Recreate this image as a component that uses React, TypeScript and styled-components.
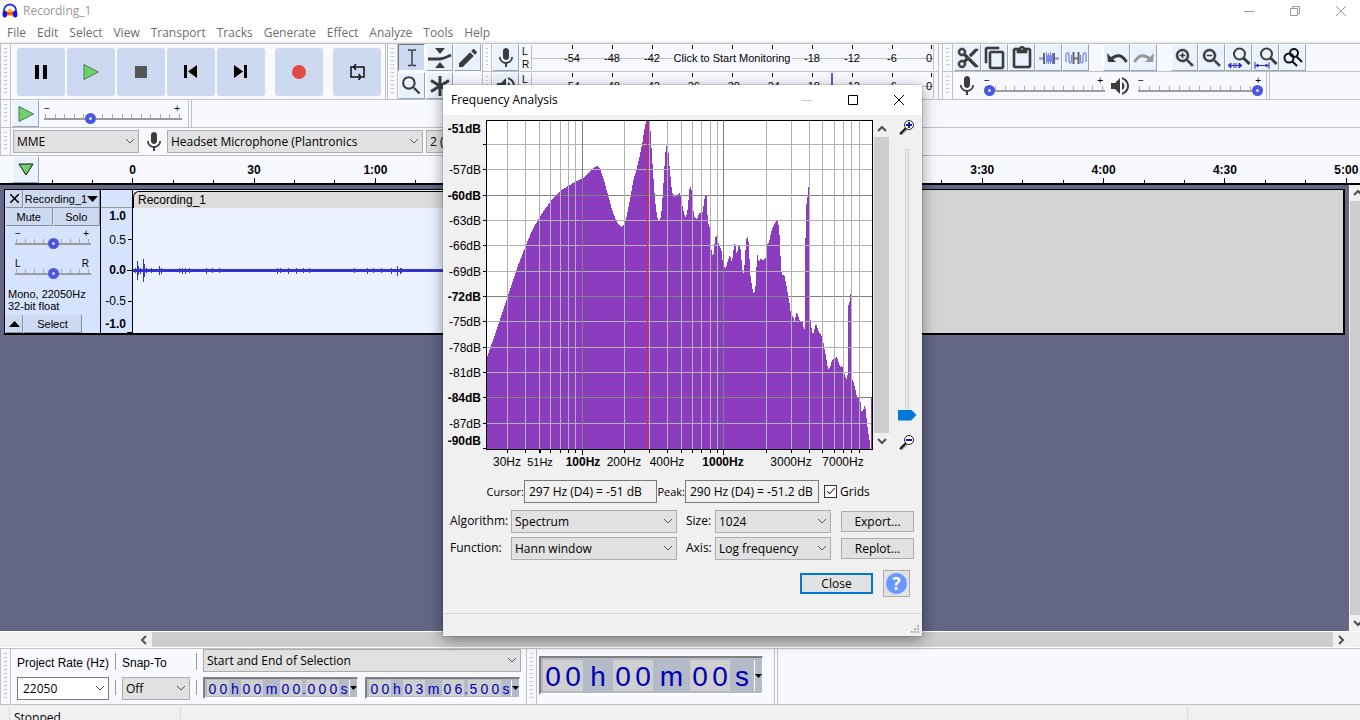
import React from "react";
import styled, { createGlobalStyle, css } from "styled-components";
import {
  MdMic, MdVolumeUp, MdContentCut, MdContentCopy, MdContentPaste,
  MdZoomIn, MdZoomOut, MdSearch, MdEdit,
} from "react-icons/md";

const ui = `"Open Sans", "Noto Sans", sans-serif`;
const arial = `"Liberation Sans", Arial, sans-serif`;
const line = "#c0c0c0";
const paper = "#f8f9ff";
const ink = "#3c3c3c";
const wave = "#3333cc";

const GlobalStyle = createGlobalStyle`
  *, *::before, *::after { box-sizing: border-box; }
  body { margin: 0; background: #fff; font: 11px/16px ${ui}; color: #000; overflow: hidden; }
  button, select, input { font: inherit; color: inherit; margin: 0; border-radius: 0; }
  button { padding: 0; border: 0; background: none; display: flex; align-items: center; justify-content: center; }
  svg { display: block; flex: none; }
`;

const Page = styled.div`
  position: relative;
  display: flex;
  flex-direction: column;
  height: 100vh;
  min-height: 700px;
  overflow: hidden;
`;

/* ---------- window chrome ---------- */
const TitleBar = styled.header`
  display: flex;
  align-items: center;
  height: 22px;
  padding-left: 2px;
  margin-right: -4px;
  color: #999;
`;
const WindowName = styled.span`
  flex: 1;
  font-size: 12px;
`;
const AppName = styled(WindowName)`
  padding-left: 5px;
`;
const ChromeButton = styled.button`
  width: 46px;
  height: 100%;
`;
const MenuBar = styled.nav`
  display: flex;
  gap: 11px;
  height: 21px;
  padding: 2px 7px 0;
  border-bottom: 2px solid #f0f0f0;
  color: #6d6d6d;
  background: #fff;
`;
const MenuItem = styled.button`
  font-size: 12px;
  height: 17px;
`;

/* ---------- docked toolbars ---------- */
const Dock = styled.div`
  background: ${paper};
  border-top: 1px solid ${line};
`;
const DockRow = styled.div<{ $h: number }>`
  display: flex;
  height: ${(p) => p.$h}px;
  border-bottom: 1px solid ${line};
`;
const Grip = styled.div<{ $slim?: boolean }>`
  width: ${(p) => (p.$slim ? 10 : 11)}px;
  flex: none;
  align-self: stretch;
  border: solid ${line};
  border-width: 0 1px;
  padding: 4px 3px;
  &::before {
    content: "";
    display: block;
    height: 100%;
    background: repeating-linear-gradient(#c4c4c4 0 1px, transparent 1px 4px);
  }
`;
const TransportBar = styled.div`
  display: flex;
  align-items: center;
  gap: 2px;
  width: 375px;
  padding: 0 4px 0 6px;
  border-right: 1px solid ${line};
  margin-right: 1px;
`;
const TransportButton = styled.button<{ $apart?: boolean }>`
  width: 48px;
  height: 48px;
  border-radius: 3px;
  background: #cdd9f1;
  margin-left: ${(p) => (p.$apart ? 8 : 0)}px;
`;
const ToolGrid = styled.div`
  display: grid;
  grid-template-columns: repeat(3, 28px);
  grid-auto-rows: 28px;
`;
const Tool = styled.button<{ $on?: boolean; $bold?: boolean }>`
  width: 27px;
  height: 27px;
  flex: none;
  color: ${ink};
  background: #eaf1ff;
  border: 1px solid #fff;
  border-color: #fff #9aa3b8 #9aa3b8 #fff;
  ${(p) => p.$on && css`
    background: #cdd9f1;
    border-color: #70788c #fff #fff #70788c;
  `}
  ${(p) => p.$bold && css`
    path { stroke-width: 0.6; }
    path[fill="none"] { stroke: none; }
  `}
`;
const Stack = styled.div<{ $fill?: boolean }>`
  display: flex;
  flex-direction: column;
  flex: ${(p) => (p.$fill ? "1" : "none")};
  > :nth-child(2) {
    height: 27px;
    border-bottom: 0;
  }
`;
const BarRow = styled.div`
  display: flex;
  align-items: center;
  height: 28px;
  border-bottom: 1px solid ${line};
`;
const PlainRow = styled.div`
  display: flex;
  align-items: center;
`;
const Space = styled.div<{ $w: number }>`
  width: ${(p) => p.$w}px;
  flex: none;
`;
const EndLines = styled.div`
  width: 4px;
  align-self: stretch;
  border: solid ${line};
  border-width: 0 1px;
`;

/* ---------- meters ---------- */
const MeterRow = styled(BarRow)`
  width: 447px;
  margin-right: 3px;
  border-right: 1px solid ${line};
`;
const Channels = styled.div`
  display: flex;
  flex-direction: column;
  width: 12px;
  padding-left: 3px;
  font: 10px/13px ${arial};
`;
const Scale = styled.div`
  position: relative;
  display: flex;
  width: 403px;
  height: 25px;
  padding-left: 20px;
  border: solid ${line};
  border-width: 0 1px;
  font: 11px/14px ${arial};
  background: linear-gradient(${line}, ${line}) 0 13px / 100% 1px no-repeat;
`;
const ScaleMark = styled.div<{ $end?: boolean }>`
  display: flex;
  flex-direction: column;
  align-items: ${(p) => (p.$end ? "flex-end" : "center")};
  gap: 2px;
  width: ${(p) => (p.$end ? 20 : 40)}px;
  &::before { content: ""; width: 1px; height: 4px; background: #000; }
`;
const Monitor = styled.button`
  position: absolute;
  left: 140px;
  top: 5px;
  width: 120px;
  height: 16px;
  background: ${paper};
`;
const PeakMark = styled.div`
  position: absolute;
  left: 299px;
  top: 0;
  width: 2px;
  height: 12px;
  background: #5a5ae0;
`;

/* ---------- sliders ---------- */
const SliderBox = styled.div<{ $w: number }>`
  width: ${(p) => p.$w}px;
  height: 20px;
  position: relative;
  flex: none;
`;
const Ends = styled.div`
  display: flex;
  justify-content: space-between;
  height: 10px;
  padding-right: 2px;
  font: 10px/10px ${arial};
`;
const Ticks = styled.div`
  display: flex;
  justify-content: space-between;
  height: 6px;
  padding: 0 2px 0 1px;
  border-bottom: 2px solid #9c9c9c;
  i { width: 1px; height: 4px; background: #aaa; }
  i:first-child, i:last-child { height: 5px; }
`;
const Range = styled.input`
  position: absolute;
  left: 0;
  top: 9px;
  width: 100%;
  height: 11px;
  appearance: none;
  background: transparent;
  &::-webkit-slider-thumb {
    appearance: none;
    width: 11px;
    height: 11px;
    border-radius: 50%;
    border: 4px solid #4a55e0;
    background: #d8d8d8;
  }
`;
function Slider({ w, value, label, ticks = 15, ends = ["−", "+"] }: { w: number; value: number; label: string; ticks?: number; ends?: string[] }) {
  return (
    <SliderBox $w={w}>
      <Ends><span>{ends[0]}</span><span>{ends[1]}</span></Ends>
      <Ticks>{Array.from({ length: ticks }, (_, i) => <i key={i} />)}</Ticks>
      <Range type="range" min={0} max={100} defaultValue={value} aria-label={label} />
    </SliderBox>
  );
}

/* ---------- drop-downs ---------- */
const Drop = styled.div<{ $w?: number; $white?: boolean }>`
  position: relative;
  width: ${(p) => (p.$w ? p.$w + "px" : "100%")};
  height: 23px;
  flex: none;
  select {
    appearance: none;
    width: 100%;
    height: 100%;
    padding: 0 20px 0 ${(p) => (p.$white ? 5 : 3)}px;
    font-size: 12px;
    border: 1px solid ${(p) => (p.$white ? "#7a7a7a" : "#adadad")};
    background: ${(p) => (p.$white ? "#fff" : "#e1e1e1")};
  }
  svg { position: absolute; right: 4px; top: 8px; pointer-events: none; }
`;
function Select({ w, text, label, white, id }: { w?: number; text: string; label?: string; white?: boolean; id?: string }) {
  return (
    <Drop $w={w} $white={white}>
      <select id={id} aria-label={label}><option>{text}</option></select>
      <svg width="10" height="7" fill="none" stroke="#555"><path d="M1 1l4 4 4-4" /></svg>
    </Drop>
  );
}

/* ---------- timeline ---------- */
const Timeline = styled.div`
  display: flex;
  height: 29px;
  padding-left: 12px;
  background: ${paper};
  border-bottom: 2px solid #000;
  overflow: hidden;
`;
const LeadTick = styled.div`
  width: 33px;
  flex: none;
  border-left: 13px solid transparent;
  display: flex;
  align-items: flex-end;
  &::before { content: ""; width: 1px; height: 3px; background: #000; }
`;
const Hours = styled.div`
  flex: 1;
  display: grid;
  grid-template-columns: repeat(11, 1fr);
  margin-right: -47px;
  font: bold 12px/16px ${arial};
`;
const HalfMinute = styled.div`
  display: flex;
  flex-direction: column;
  align-items: center;
  justify-content: flex-end;
`;
const MinorTicks = styled.div`
  display: grid;
  grid-template-columns: repeat(3, 1fr);
  width: 100%;
  justify-items: center;
  align-items: end;
  height: 5px;
  i { width: 1px; height: 3px; background: #000; }
  i:nth-child(2) { height: 5px; }
`;

/* ---------- tracks ---------- */
const Workspace = styled.main`
  flex: 1;
  min-height: 0;
  display: flex;
  background: #636685;
`;
const TrackList = styled.div`
  flex: 1;
  min-width: 0;
  padding: 4px 4px 0 4px;
  border-right: 1px solid #fff;
`;
const Track = styled.section`
  display: flex;
  height: 146px;
  border: solid #000;
  border-width: 1px 2px 2px 1px;
  background: #d6e3ff;
`;
const Panel = styled.div`
  display: flex;
  flex-direction: column;
  width: 96px;
  padding-left: 1px;
  border-right: 1px solid #000;
  font: 11px/12px ${arial};
`;
const PanelRow = styled.div`
  display: flex;
  height: 18px;
  gap: 1px;
  background: #d6e3ff;
`;
const PanelButton = styled.button<{ $w?: number }>`
  ${(p) => (p.$w ? `width: ${p.$w}px;` : "flex: 1;")}
  background: #cdd9f1;
  border: solid #8a8f9c;
  border-width: 0 1px 1px 0;
`;
const PanelSliders = styled.div`
  display: flex;
  flex-direction: column;
  gap: 10px;
  flex: 1;
  padding: 3px 9px 0;
`;
const Info = styled.div`
  padding: 0 2px 3px;
  white-space: nowrap;
`;
const VRuler = styled.div`
  width: 32px;
  border-right: 1px solid #000;
`;
const ClipArea = styled.div`
  flex: 1;
  background: #d4d4d4;
`;
const Clip = styled.div`
  width: 63%;
  height: 100%;
  padding-top: 1px;
  background: #ebf1ff;
`;
const ClipName = styled.div`
  height: 17px;
  padding-left: 4px;
  border: solid #000;
  border-width: 1px 0 0 1px;
  border-radius: 6px 0 0 0;
  background: #dcdcdc;
  font: 12px/16px ${arial};
`;

/* ---------- scroll bars ---------- */
const VScroll = styled.div<{ $w: number }>`
  display: flex;
  flex-direction: column;
  align-items: flex-start;
  width: ${(p) => p.$w}px;
  flex: none;
  background: #f0f0f0;
  overflow: hidden;
`;
const HScroll = styled.div`
  display: flex;
  align-items: center;
  height: 17px;
  flex: none;
  padding: 0 11px 0 136px;
  background: #f0f0f0;
  border: solid #fff;
  border-width: 1px 0 1px;
`;
const ScrollButton = styled.button`
  width: 16px;
  height: 16px;
`;
const Thumb = styled.div`
  flex: 1;
  align-self: stretch;
  background: #cdcdcd;
`;
const Arrow = ({ d }: { d: string }) => (
  <svg width="10" height="10" fill="none" stroke="#505050" strokeWidth="2"><path d={d} /></svg>
);
const UP = "M1 7l4-4 4 4", DOWN = "M1 3l4 4 4-4", LEFT = "M7 1L3 5l4 4", RIGHT = "M3 1l4 4-4 4";

/* ---------- selection bar ---------- */
const BottomBar = styled.div`
  display: flex;
  height: 57px;
  flex: none;
  background: ${paper};
  border: solid ${line};
  border-width: 1px 0;
`;
const Cell = styled.div<{ $w: number }>`
  display: flex;
  flex-direction: column;
  gap: 4px;
  width: ${(p) => p.$w}px;
  padding: 2px 0 0 6px;
`;
const CellLabel = styled.label`
  height: 22px;
  padding-top: 4px;
  font: 12px/16px ${arial};
  white-space: nowrap;
`;
const Divider = styled.div`
  width: 1px;
  margin: 4px 0 9px 6px;
  background: linear-gradient(#999 0 17px, transparent 17px 27px, #999 27px);
`;
const SelectionCell = styled.div`
  display: flex;
  flex-direction: column;
  gap: 5px;
  width: 329px;
  padding-left: 6px;
`;
const TimePair = styled.div`
  display: flex;
  gap: 7px;
`;
const TimeBox = styled.div<{ $big?: boolean }>`
  display: flex;
  width: ${(p) => (p.$big ? 224 : 155)}px;
  height: ${(p) => (p.$big ? 39 : 22)}px;
  padding: ${(p) => (p.$big ? "2px 0 2px 2px" : "1px 0 1px 2px")};
  border: 2px solid #fff;
  border-color: #808080 #fff #fff #808080;
  border-right-width: 1px;
  background: #b4bac8;
  color: #0000b4;
  font: ${(p) => (p.$big ? "28px/34px" : "14px/18px")} ${arial};
`;
const Glyph = styled.span<{ $w: number; $digit?: boolean }>`
  width: ${(p) => p.$w}px;
  flex: none;
  display: flex;
  justify-content: center;
  background: ${(p) => (p.$digit ? "#cfcfcf" : "transparent")};
`;
const TimeMenu = styled.button`
  flex: 1;
  min-width: 0;
  border-left: 1px solid #fff;
`;
const BIG: Record<string, number> = { h: 30, m: 37, s: 24 };
const SMALL: Record<string, number> = { h: 12, m: 17, s: 10, ".": 4 };
function Time({ text, big, label }: { text: string; big?: boolean; label: string }) {
  return (
    <TimeBox $big={big} role="group" aria-label={label}>
      {text.split("").map((c, i) => {
        const digit = c >= "0" && c <= "9";
        return <Glyph key={i} $digit={digit} $w={digit ? (big ? 20 : 11) : (big ? BIG : SMALL)[c]}>{c}</Glyph>;
      })}
      <TimeMenu aria-label="Time format"><svg width="7" height="4"><path d="M0 0h7L3.500 4z" /></svg></TimeMenu>
    </TimeBox>
  );
}
const BigTime = styled.div`
  display: flex;
  align-items: flex-start;
  width: 237px;
  padding: 7px 0 0 2px;
`;
const StatusBar = styled.footer`
  display: flex;
  height: 15px;
  flex: none;
  padding-left: 9px;
  background: #f0f0f0;
  overflow: hidden;
`;
const StatusCell = styled.div<{ $w?: number }>`
  ${(p) => (p.$w ? `width: ${p.$w}px;` : "flex: 1;")}
  height: 22px;
  margin-top: 2px;
  padding: 3px 4px;
  border-left: 1px solid #d8d8d8;
  font-size: 12px;
`;

/* ---------- frequency analysis dialog ---------- */
const Dialog = styled.div`
  position: absolute;
  left: 443px;
  top: 85px;
  width: 479px;
  background: #f0f0f0;
  box-shadow: 0 4px 14px rgba(0, 0, 0, 0.42), 0 0 1px rgba(0, 0, 0, 0.6);
`;
const DialogTitle = styled.div`
  display: flex;
  align-items: center;
  height: 30px;
  padding-left: 8px;
  background: #fff;
  font-size: 12px;
`;
const Plot = styled.div`
  display: flex;
  height: 357px;
`;
const PlotScroll = styled(VScroll)`
  margin: 6px 0 23px;
`;
const ZoomColumn = styled.div`
  display: flex;
  flex-direction: column;
  align-items: center;
  justify-content: space-between;
  width: 33px;
  padding: 4px 0 22px 3px;
`;
const VRange = styled.input`
  writing-mode: vertical-lr;
  direction: rtl;
  appearance: none;
  width: 19px;
  height: 272px;
  background: linear-gradient(#e7eaea, #e7eaea) 8px 1px / 2px 270px no-repeat,
    linear-gradient(#d6d6d6, #d6d6d6) 7px 0 / 4px 100% no-repeat;
  &::-webkit-slider-thumb {
    appearance: none;
    width: 19px;
    height: 11px;
    background: #0078d7;
    clip-path: polygon(0 0, 72% 0, 100% 50%, 72% 100%, 0 100%);
  }
`;
const Readouts = styled.div`
  display: flex;
  align-items: center;
  height: 23px;
  margin: 8px 0 7px 43px;
  font-size: 12px;
  label { display: flex; align-items: center; white-space: nowrap; }
`;
const ReadLabel = styled.label<{ $w: number }>`
  width: ${(p) => p.$w}px;
  justify-content: flex-end;
  font-size: 11px;
`;
const ReadBox = styled.input<{ $w: number }>`
  width: ${(p) => p.$w}px;
  height: 23px;
  padding: 0 4px 1px;
  border: 1px solid #7a7a7a;
  background: #f0f0f0;
`;
const Check = styled.input`
  appearance: none;
  width: 13px;
  height: 13px;
  margin: 0 3px 0 5px;
  border: 1px solid #333;
  background: #fff;
  position: relative;
  &:checked::after {
    content: "";
    position: absolute;
    left: 4px;
    top: 0;
    width: 4px;
    height: 8px;
    border: solid #222;
    border-width: 0 1px 1px 0;
    transform: rotate(42deg);
  }
`;
const Options = styled.div`
  display: grid;
  grid-template-columns: 61px 166px 38px 116px 83px;
  row-gap: 4px;
  padding-left: 7px;
  font-size: 12px;
  label { line-height: 21px; }
  label:nth-of-type(2n) { padding-left: 9px; }
`;
const PushButton = styled.button<{ $main?: boolean }>`
  width: 73px;
  height: 21px;
  font-size: 12px;
  border: ${(p) => (p.$main ? "2px solid #0078d7" : "1px solid #adadad")};
  background: #e1e1e1;
`;
const PushCell = styled.div`
  padding: 1px 0 0 10px;
`;
const Actions = styled.div`
  display: flex;
  justify-content: flex-end;
  align-items: center;
  gap: 10px;
  padding: 10px 12px 16px 0;
`;
const HelpButton = styled.button`
  width: 27px;
  height: 27px;
  border: 1px solid #adadad;
  background: #e1e1e1;
  span {
    width: 21px;
    height: 21px;
    border-radius: 50%;
    background: #6698ff;
    color: #fff;
    font: bold 17px/21px ${ui};
  }
`;
const DialogStatus = styled.div`
  display: flex;
  justify-content: flex-end;
  align-items: flex-end;
  height: 23px;
  padding: 2px;
  border-top: 1px solid #d7d7d7;
`;

/* ---------- spectrum data, in plot coordinates ---------- */
const spectrum = "487,358 492,343 500,320 507,298 512,284 519,263 526,245 532,231 539,218 545,209 551,201 560,191 568,186 575,182 583,178 587,175 592,169 597,166 600,169 603,177 608,195 613,213 617,222 621,227 624,225 627,215 630,200 633,182 637,167 640,155 642,145 644,132 646,121 650,121 651,140 653,172 655,200 657,216 659,223 661,217 663,192 665,158 666,146 668,147 670,172 672,192 674,197 680,193 682,203 684,214 686,218 688,207 689,193 690,185 692,191 693,205 694,217 697,219 700,212 702,215 704,203 705,196 707,196 707,208 708,222 710,228 711,248 713,257 714,252 715,237 717,236 718,242 720,246 722,253 723,267 726,268 728,260 730,255 732,263 733,253 735,241 737,257 738,246 740,246 741,252 742,268 744,275 745,255 747,234 749,245 750,272 752,287 754,295 756,283 757,252 759,262 761,258 763,261 766,257 767,245 769,242 771,233 773,227 775,223 777,219 779,227 780,242 781,270 783,277 784,274 786,283 788,295 790,305 791,317 793,316 795,323 796,312 798,315 800,322 802,320 804,329 805,329 805,279 806,200 807,208 808,187 809,187 809,305 811,325 813,335 816,323 818,330 821,335 823,339 824,346 826,357 828,369 830,368 832,360 837,357 840,367 842,365 844,373 847,380 848,370 848,307 850,300 850,294 851,294 851,380 853,380 855,388 857,397 860,397 860,393 861,411 863,411 865,405 866,413 867,423 869,437 870,443 870,449";
const gridX = [507, 525, 539, 550, 560, 568, 575, 582, 624, 649, 667, 681, 692, 701, 710, 717, 723, 766, 791, 809, 822, 834, 843, 851, 859];
const gridY = [144, 169, 195, 220, 245, 271, 296, 321, 347, 372, 397, 423];
const dbLabels: [string, number, boolean][] = [
  ["-51dB", 128, true], ["-57dB", 169, false], ["-60dB", 195, true], ["-63dB", 220, false], ["-66dB", 245, false],
  ["-69dB", 271, false], ["-72dB", 296, true], ["-75dB", 321, false], ["-78dB", 347, false], ["-81dB", 372, false],
  ["-84dB", 397, true], ["-87dB", 423, false], ["-90dB", 440, true],
];
const hzLabels: [string, number, boolean, number][] = [
  ["30Hz", 507, false, 12], ["51Hz", 540, false, 11], ["100Hz", 583, true, 12], ["200Hz", 624, false, 12],
  ["400Hz", 667, false, 12], ["1000Hz", 723, true, 12], ["3000Hz", 791, false, 12], ["7000Hz", 843, false, 12],
];
function SpectrumPlot() {
  return (
    <svg width="431" height="357" viewBox="443 115 431 357" fontFamily={arial} fontSize="12" shapeRendering="crispEdges">
      <rect x="486" y="120" width="387" height="330" />
      <rect x="487" y="121" width="385" height="328" fill="#fff" />
      <polygon points={`487,449 ${spectrum}`} fill="#8c3cbe" />
      {gridY.map((y) => <rect key={y} x="487" y={y} width="385" height="1" fill={[195, 296, 397].includes(y) ? "#808080" : "#b2b2b2"} />)}
      {gridX.map((x) => <rect key={x} x={x} y="121" width="1" height="328" fill={x === 582 || x === 723 ? "#808080" : "#b2b2b2"} />)}
      <rect x="647" y="121" width="1" height="328" fill="#f0203c" />
      <rect x="871" y="397" width="1" height="52" fill="#8c3cbe" />
      {[...gridY, 448].map((y) => <rect key={y} x="483" y={y} width="3" height="1" />)}
      {[...gridX, 540].map((x) => <rect key={x} x={x} y="450" width="1" height={x === 582 || x === 723 ? 5 : 3} />)}
      {dbLabels.map(([t, y, b]) => <text key={t} x="481" y={y + 5} textAnchor="end" fontWeight={b ? 700 : 400}>{t}</text>)}
      {hzLabels.map(([t, x, b, s]) => <text key={t} x={x} y="466" textAnchor="middle" fontSize={s} fontWeight={b ? 700 : 400}>{t}</text>)}
    </svg>
  );
}

function DialogZoomIcon({ plus }: { plus?: boolean }) {
  return (
    <svg width="16" height="16" viewBox="0 0 16 16">
      <path d="M1 15l6-6" stroke="#aaa" strokeWidth="2" transform="translate(1 1)" />
      <path d="M1 15l6-6" stroke="#111" strokeWidth="2" />
      <circle cx="10" cy="6" r="4.500" fill="#fff" stroke="#222" />
      <path d={plus ? "M7 6h6M10 3v6" : "M7 6h6"} stroke="#1414b4" strokeWidth="2" />
    </svg>
  );
}

/* ---------- icons ---------- */
const Logo = () => (
  <svg width="16" height="16" viewBox="0 0 16 16">
    <path d="M2 10C1 5 4 1.500 8 1.500S15 5 14 10" fill="none" stroke="#2838d0" strokeWidth="1.800" />
    <path d="M4 9l2-2 2-1.500L10 7l2 2v3l-2 1.500-2-1-2 1L4 12z" fill="#ffb428" />
    <path d="M4.500 9.500h7v2h-7z" fill="#f03c14" />
    <ellipse cx="2.800" cy="11" rx="2.300" ry="3.500" fill="#1414e6" />
    <ellipse cx="13.200" cy="11" rx="2.300" ry="3.500" fill="#1414e6" />
  </svg>
);
const PlayIcon = () => (
  <svg width="18" height="18" viewBox="0 0 18 18"><path d="M2 1.500v15L16.500 9z" fill="#6fd06f" stroke="#4b7a4b" /></svg>
);
const SelectIcon = () => (
  <svg width="16" height="20" viewBox="0 0 16 20" stroke={ink} strokeWidth="1.500" fill="none"><path d="M4 2h3.500M8.500 2H12M8 2v15.500M4 17.500h3.500M8.500 17.500H12" /></svg>
);
const EnvelopeIcon = () => (
  <svg width="26" height="22" viewBox="0 0 26 22" fill={ink}>
    <path d="M8 1h10l-5 6zM8 21h10l-5-6z" /><path d="M1 12h11q4 0 12-4" fill="none" stroke={ink} strokeWidth="3" />
  </svg>
);
const StarIcon = () => (
  <svg width="22" height="22" viewBox="0 0 22 22" stroke={ink} strokeWidth="3"><path d="M11 1v20M2 5.500l18 11M20 5.500l-18 11" /></svg>
);
const TrimIcon = () => (
  <svg width="20" height="14" viewBox="0 0 20 14" stroke="#7d8ae8" strokeWidth="1">
    <path d="M0 7.500h4M16 7.500h4" strokeWidth="2" /><path d="M7.500 1v12M9.500 2v11M11.500 1v12M13.500 2v11M8.500 4v7M10.500 4v7M12.500 4v7" /><path d="M5 2v11M15 2v11" stroke="#666" strokeWidth="2" />
  </svg>
);
const SilenceIcon = () => (
  <svg width="22" height="14" viewBox="0 0 22 14" stroke="#7d8ae8" strokeWidth="1.300" fill="none">
    <path d="M1 11V5q0-3 1.500-3T4 5v4q0 3 1.200 3T6.500 9V4M15.500 4v5q0 3 1.300 3T18 9V5q0-3 1.500-3T21 5v6" /><path d="M9 7.500h5" stroke="#777" strokeWidth="2" /><path d="M8.500 1v12M13.500 1v12" stroke="#666" strokeWidth="2" />
  </svg>
);
const UndoArrow = ({ flip }: { flip?: boolean }) => (
  <svg width="22" height="14" viewBox="0 0 22 14" fill="none" stroke={flip ? "#999" : ink} strokeWidth="3">
    <g transform={flip ? "matrix(-1 0 0 1 22 0)" : undefined}>
      <path d="M5 8q9-8 15.500 3" /><path d="M1 2l1 9 8 0z" fill={flip ? "#999" : ink} stroke="none" />
    </g>
  </svg>
);
const FitIcon = ({ d }: { d: string }) => (
  <svg width="24" height="24" viewBox="0 0 24 24" fill="none">
    <circle cx="12.500" cy="8" r="5.500" stroke={ink} strokeWidth="2" /><path d="M16.500 12l6 6" stroke={ink} strokeWidth="3" />
    <path d={d} stroke="#3030c8" fill="#3030c8" />
  </svg>
);
const ToggleZoomIcon = () => (
  <svg width="22" height="22" viewBox="0 0 22 22" fill="none" stroke="#111" strokeWidth="2">
    <circle cx="12" cy="6" r="4" /><circle cx="7" cy="11" r="4.500" /><path d="M14 9l6 6M10 14l5 5" />
  </svg>
);

const meterMarks = ["-54", "-48", "-42", "-36", "-30", "-24", "-18", "-12", "-6"];
const shortMarks = ["-54", "-48", "-42", "", "", "", "-18", "-12", "-6"];
function Meter({ name, marks, children, overlay }: { name: string; marks: string[]; children: React.ReactNode; overlay: React.ReactNode }) {
  return (
    <MeterRow>
      <Tool aria-label={name}>{children}</Tool>
      <Channels><span>L</span><span>R</span></Channels>
      <Scale>
        {marks.map((m, i) => <ScaleMark key={i}>{m}</ScaleMark>)}
        <ScaleMark $end>0</ScaleMark>
        {overlay}
      </Scale>
    </MeterRow>
  );
}

const spikes = [[2, 4], [4, 18], [5, 8], [7, 5], [10, 22], [11, 12], [13, 4], [18, 4], [26, 8], [28, 5], [46, 4], [49, 5], [52, 5], [56, 4], [73, 5], [79, 4], [86, 4], [144, 5], [147, 4], [155, 5], [163, 5], [170, 4], [176, 4], [221, 4], [234, 5], [240, 4], [248, 4], [258, 5], [264, 9], [267, 5], [268, 4]];
const rulerMarks: [string, number, boolean][] = [["1.0", 26, true], ["0.5", 50, false], ["0.0", 80, true], ["-0.5", 111, false], ["-1.0", 134, true]];
const times = ["0", "30", "1:00", "1:30", "2:00", "2:30", "3:00", "3:30", "4:00", "4:30", "5:00"];

export default function App() {
  return (
    <Page>
      <GlobalStyle />
      <TitleBar>
        <Logo />
        <AppName>Recording_1</AppName>
        <ChromeButton aria-label="Minimize"><svg width="10" height="1"><path d="M0 0h10v1H0z" fill="#999" /></svg></ChromeButton>
        <ChromeButton aria-label="Restore"><svg width="10" height="10" fill="none" stroke="#999"><path d="M.5 2.500h7v7h-7zM2.500 2V.5h7v7H8" /></svg></ChromeButton>
        <ChromeButton aria-label="Close window"><svg width="10" height="10" stroke="#999"><path d="M0 0l10 10M10 0L0 10" /></svg></ChromeButton>
      </TitleBar>
      <MenuBar>
        {["File", "Edit", "Select", "View", "Transport", "Tracks", "Generate", "Effect", "Analyze", "Tools", "Help"].map((m) => <MenuItem key={m}>{m}</MenuItem>)}
      </MenuBar>

      <Dock>
        <DockRow $h={56}>
          <Grip />
          <TransportBar>
            <TransportButton aria-label="Pause"><svg width="12" height="14"><path d="M0 0h4v14H0zM8 0h4v14H8z" /></svg></TransportButton>
            <TransportButton aria-label="Play"><PlayIcon /></TransportButton>
            <TransportButton aria-label="Stop"><svg width="12" height="12"><path d="M0 0h12v12H0z" fill="#555" /></svg></TransportButton>
            <TransportButton aria-label="Skip to start"><svg width="14" height="13"><path d="M0 0h3v13H0zM13 0v13L4 6.500z" /></svg></TransportButton>
            <TransportButton aria-label="Skip to end"><svg width="14" height="13"><path d="M10 0h3v13h-3zM0 0v13l9-6.500z" /></svg></TransportButton>
            <TransportButton aria-label="Record" $apart><svg width="14" height="14"><circle cx="7" cy="7" r="7" fill="#e24848" /></svg></TransportButton>
            <TransportButton aria-label="Loop" $apart>
              <svg width="15" height="16" viewBox="0 0 15 16" fill="none" stroke="#111" strokeWidth="1.500">
                <path d="M3 3H1v10h9M4 3h10v10h-2M6 0L3.500 3 6 6M8.500 10l2.500 3-2.500 3" />
              </svg>
            </TransportButton>
          </TransportBar>
          <Grip />
          <ToolGrid>
            <Tool $on aria-label="Selection tool"><SelectIcon /></Tool>
            <Tool aria-label="Envelope tool"><EnvelopeIcon /></Tool>
            <Tool aria-label="Draw tool"><MdEdit size={24} /></Tool>
            <Tool aria-label="Zoom tool"><MdSearch size={25} /></Tool>
            <Tool aria-label="Multi-tool"><StarIcon /></Tool>
          </ToolGrid>
          <Stack><BarRow><Grip $slim /></BarRow><BarRow><Grip $slim /></BarRow></Stack>
          <Stack>
            <Meter name="Recording meter" marks={shortMarks} overlay={<Monitor>Click to Start Monitoring</Monitor>}><MdMic size={24} /></Meter>
            <Meter name="Playback meter" marks={meterMarks} overlay={<PeakMark />}><MdVolumeUp size={24} /></Meter>
          </Stack>
          <Stack>
            <BarRow>
              <Grip />
              <Space $w={1} />
              <Tool $bold aria-label="Cut"><MdContentCut size={24} /></Tool>
              <Tool $bold aria-label="Copy"><MdContentCopy size={24} /></Tool>
              <Tool $bold aria-label="Paste"><MdContentPaste size={24} /></Tool>
              <Tool aria-label="Trim"><TrimIcon /></Tool>
              <Tool aria-label="Silence"><SilenceIcon /></Tool>
              <Space $w={14} />
              <Tool aria-label="Undo"><UndoArrow /></Tool>
              <Tool aria-label="Redo"><UndoArrow flip /></Tool>
              <Space $w={14} />
              <Tool $bold aria-label="Zoom in"><MdZoomIn size={24} /></Tool>
              <Tool $bold aria-label="Zoom out"><MdZoomOut size={24} /></Tool>
              <Tool aria-label="Fit selection"><FitIcon d="M1 19.500h14M4 17l-3 2.500L4 22zM12 17l3 2.500-3 2.500zM7 17v5M9 17v5" /></Tool>
              <Tool aria-label="Fit project"><FitIcon d="M1 16v7M15 16v7M1 19.500h14M4 18l-2 1.500L4 21zM12 18l2 1.500-2 1.500z" /></Tool>
              <Tool aria-label="Zoom toggle"><ToggleZoomIcon /></Tool>
            </BarRow>
            <BarRow>
              <Grip />
              <Space $w={2} />
              <MdMic size={24} color={ink} />
              <Space $w={5} />
              <Slider w={121} value={0} label="Recording volume" ticks={13} />
              <Space $w={3} />
              <MdVolumeUp size={24} color={ink} />
              <Space $w={6} />
              <Slider w={125} value={100} label="Playback volume" ticks={13} />
              <Space $w={3} />
              <EndLines />
            </BarRow>
          </Stack>
          <Stack $fill><BarRow /></Stack>
        </DockRow>
        <DockRow $h={28}>
          <Grip />
          <Space $w={1} />
          <Tool aria-label="Play at speed"><PlayIcon /></Tool>
          <Space $w={5} />
          <PlainRow><Slider w={138} value={32} label="Playback speed" /></PlainRow>
          <Space $w={6} />
          <EndLines />
        </DockRow>
        <DockRow $h={28}>
          <Grip />
          <Space $w={2} />
          <PlainRow>
            <Select w={126} text="MME" label="Audio host" />
            <Space $w={3} />
            <MdMic size={24} color={ink} />
            <Space $w={1} />
            <Select w={256} text="Headset Microphone (Plantronics" label="Recording device" />
            <Space $w={3} />
            <Select w={160} text="2 (Stereo)" label="Recording channels" />
          </PlainRow>
        </DockRow>
      </Dock>

      <Timeline>
        <Tool aria-label="Timeline options"><svg width="16" height="14"><path d="M1 1h14L8 12z" fill="#6fd06f" stroke="#111" /></svg></Tool>
        <LeadTick />
        <Hours>
          {times.map((t) => (
            <HalfMinute key={t}><span>{t}</span><MinorTicks><i /><i /><i /></MinorTicks></HalfMinute>
          ))}
        </Hours>
      </Timeline>

      <Workspace>
        <TrackList>
          <Track>
            <Panel>
              <PanelRow>
                <PanelButton $w={17} aria-label="Close track"><svg width="9" height="9" stroke="#000" strokeWidth="1.500"><path d="M0 0l9 9M9 0L0 9" /></svg></PanelButton>
                <PanelButton>Recording_1<svg width="11" height="6"><path d="M0 0h11L5.500 6z" /></svg></PanelButton>
              </PanelRow>
              <PanelRow>
                <PanelButton>Mute</PanelButton>
                <PanelButton>Solo</PanelButton>
              </PanelRow>
              <PanelSliders>
                <Slider w={76} value={50} label="Gain" ticks={9} />
                <Slider w={76} value={50} label="Pan" ticks={9} ends={["L", "R"]} />
              </PanelSliders>
              <Info>Mono, 22050Hz<br />32-bit float</Info>
              <PanelRow>
                <PanelButton $w={17} aria-label="Collapse"><svg width="11" height="6"><path d="M0 6h11L5.500 0z" /></svg></PanelButton>
                <PanelButton $w={58}>Select</PanelButton>
              </PanelRow>
            </Panel>
            <VRuler>
              <svg width="31" height="143" fontFamily={arial} fontSize="12">
                <path d="M0 17.500h31" stroke="#999" />
                {rulerMarks.map(([t, y, b]) => <text key={t} x="25" y={y + 4} textAnchor="end" fontWeight={b ? 700 : 400}>{t}</text>)}
                <path d="M27 49.500h4M26 80.500h5M27 111.500h4M26 142.500h5" stroke="#000" />
              </svg>
            </VRuler>
            <ClipArea>
              <Clip>
                <ClipName>Recording_1</ClipName>
                <svg width="100%" height="125" shapeRendering="crispEdges" fill={wave}>
                  <rect x="0" y="61" width="100%" height="3" />
                  {spikes.map(([x, h]) => <rect key={x} x={x} y={62 - Math.floor(h / 2)} width="1" height={h + 1} />)}
                </svg>
              </Clip>
            </ClipArea>
          </Track>
        </TrackList>
        <VScroll $w={10}>
          <ScrollButton aria-label="Scroll up"><Arrow d={UP} /></ScrollButton>
          <Thumb />
          <ScrollButton aria-label="Scroll down"><Arrow d={DOWN} /></ScrollButton>
        </VScroll>
      </Workspace>
      <HScroll>
        <ScrollButton aria-label="Scroll left"><Arrow d={LEFT} /></ScrollButton>
        <Thumb />
        <ScrollButton aria-label="Scroll right"><Arrow d={RIGHT} /></ScrollButton>
      </HScroll>

      <BottomBar>
        <Grip />
        <Cell $w={98}>
          <CellLabel htmlFor="rate">Project Rate (Hz)</CellLabel>
          <Select id="rate" text="22050" white />
        </Cell>
        <Divider />
        <Cell $w={74}>
          <CellLabel htmlFor="snap">Snap-To</CellLabel>
          <Select id="snap" text="Off" />
        </Cell>
        <Divider />
        <SelectionCell>
          <Select w={318} text="Start and End of Selection" label="Selection mode" />
          <TimePair>
            <Time text="00h00m00.000s" label="Selection start" />
            <Time text="00h03m06.500s" label="Selection end" />
          </TimePair>
        </SelectionCell>
        <Grip />
        <BigTime><Time big text="00h00m00s" label="Audio position" /></BigTime>
        <EndLines />
      </BottomBar>
      <StatusBar>
        <StatusCell $w={171}>Stopped</StatusCell>
        <StatusCell />
        <StatusCell $w={173} />
      </StatusBar>

      <Dialog role="dialog" aria-label="Frequency Analysis">
        <DialogTitle>
          <WindowName>Frequency Analysis</WindowName>
          <ChromeButton aria-label="Minimize dialog"><svg width="10" height="1"><path d="M0 0h10v1H0z" fill="#ccc" /></svg></ChromeButton>
          <ChromeButton aria-label="Maximize dialog"><svg width="10" height="10" fill="none" stroke="#000"><path d="M.5.5h9v9h-9z" /></svg></ChromeButton>
          <ChromeButton aria-label="Close dialog"><svg width="10" height="10" stroke="#000"><path d="M0 0l10 10M10 0L0 10" /></svg></ChromeButton>
        </DialogTitle>
        <Plot>
          <SpectrumPlot />
          <PlotScroll $w={15}>
            <ScrollButton aria-label="Pan up"><Arrow d={UP} /></ScrollButton>
            <Thumb />
            <ScrollButton aria-label="Pan down"><Arrow d={DOWN} /></ScrollButton>
          </PlotScroll>
          <ZoomColumn>
            <DialogZoomIcon plus />
            <VRange type="range" min={0} max={100} defaultValue={0} aria-label="Zoom" />
            <DialogZoomIcon />
          </ZoomColumn>
        </Plot>
        <Readouts>
          <ReadLabel $w={38} htmlFor="cursor">Cursor:</ReadLabel>
          <ReadBox $w={133} id="cursor" readOnly defaultValue="297 Hz (D4) = -51 dB" />
          <ReadLabel $w={28} htmlFor="peak">Peak:</ReadLabel>
          <ReadBox $w={134} id="peak" readOnly defaultValue="290 Hz (D4) = -51.2 dB" />
          <label><Check type="checkbox" defaultChecked />Grids</label>
        </Readouts>
        <Options>
          <label htmlFor="algorithm">Algorithm:</label>
          <Select id="algorithm" text="Spectrum" />
          <label htmlFor="size">Size:</label>
          <Select id="size" text="1024" />
          <PushCell><PushButton>Export...</PushButton></PushCell>
          <label htmlFor="function">Function:</label>
          <Select id="function" text="Hann window" />
          <label htmlFor="axis">Axis:</label>
          <Select id="axis" text="Log frequency" />
          <PushCell><PushButton>Replot...</PushButton></PushCell>
        </Options>
        <Actions>
          <PushButton $main>Close</PushButton>
          <HelpButton aria-label="Help"><span>?</span></HelpButton>
        </Actions>
        <DialogStatus>
          <svg width="9" height="9" fill="#b0b0b0"><path d="M6 0h2v2H6zM3 3h2v2H3zM6 3h2v2H6zM0 6h2v2H0zM3 6h2v2H3zM6 6h2v2H6z" /></svg>
        </DialogStatus>
      </Dialog>
    </Page>
  );
}
